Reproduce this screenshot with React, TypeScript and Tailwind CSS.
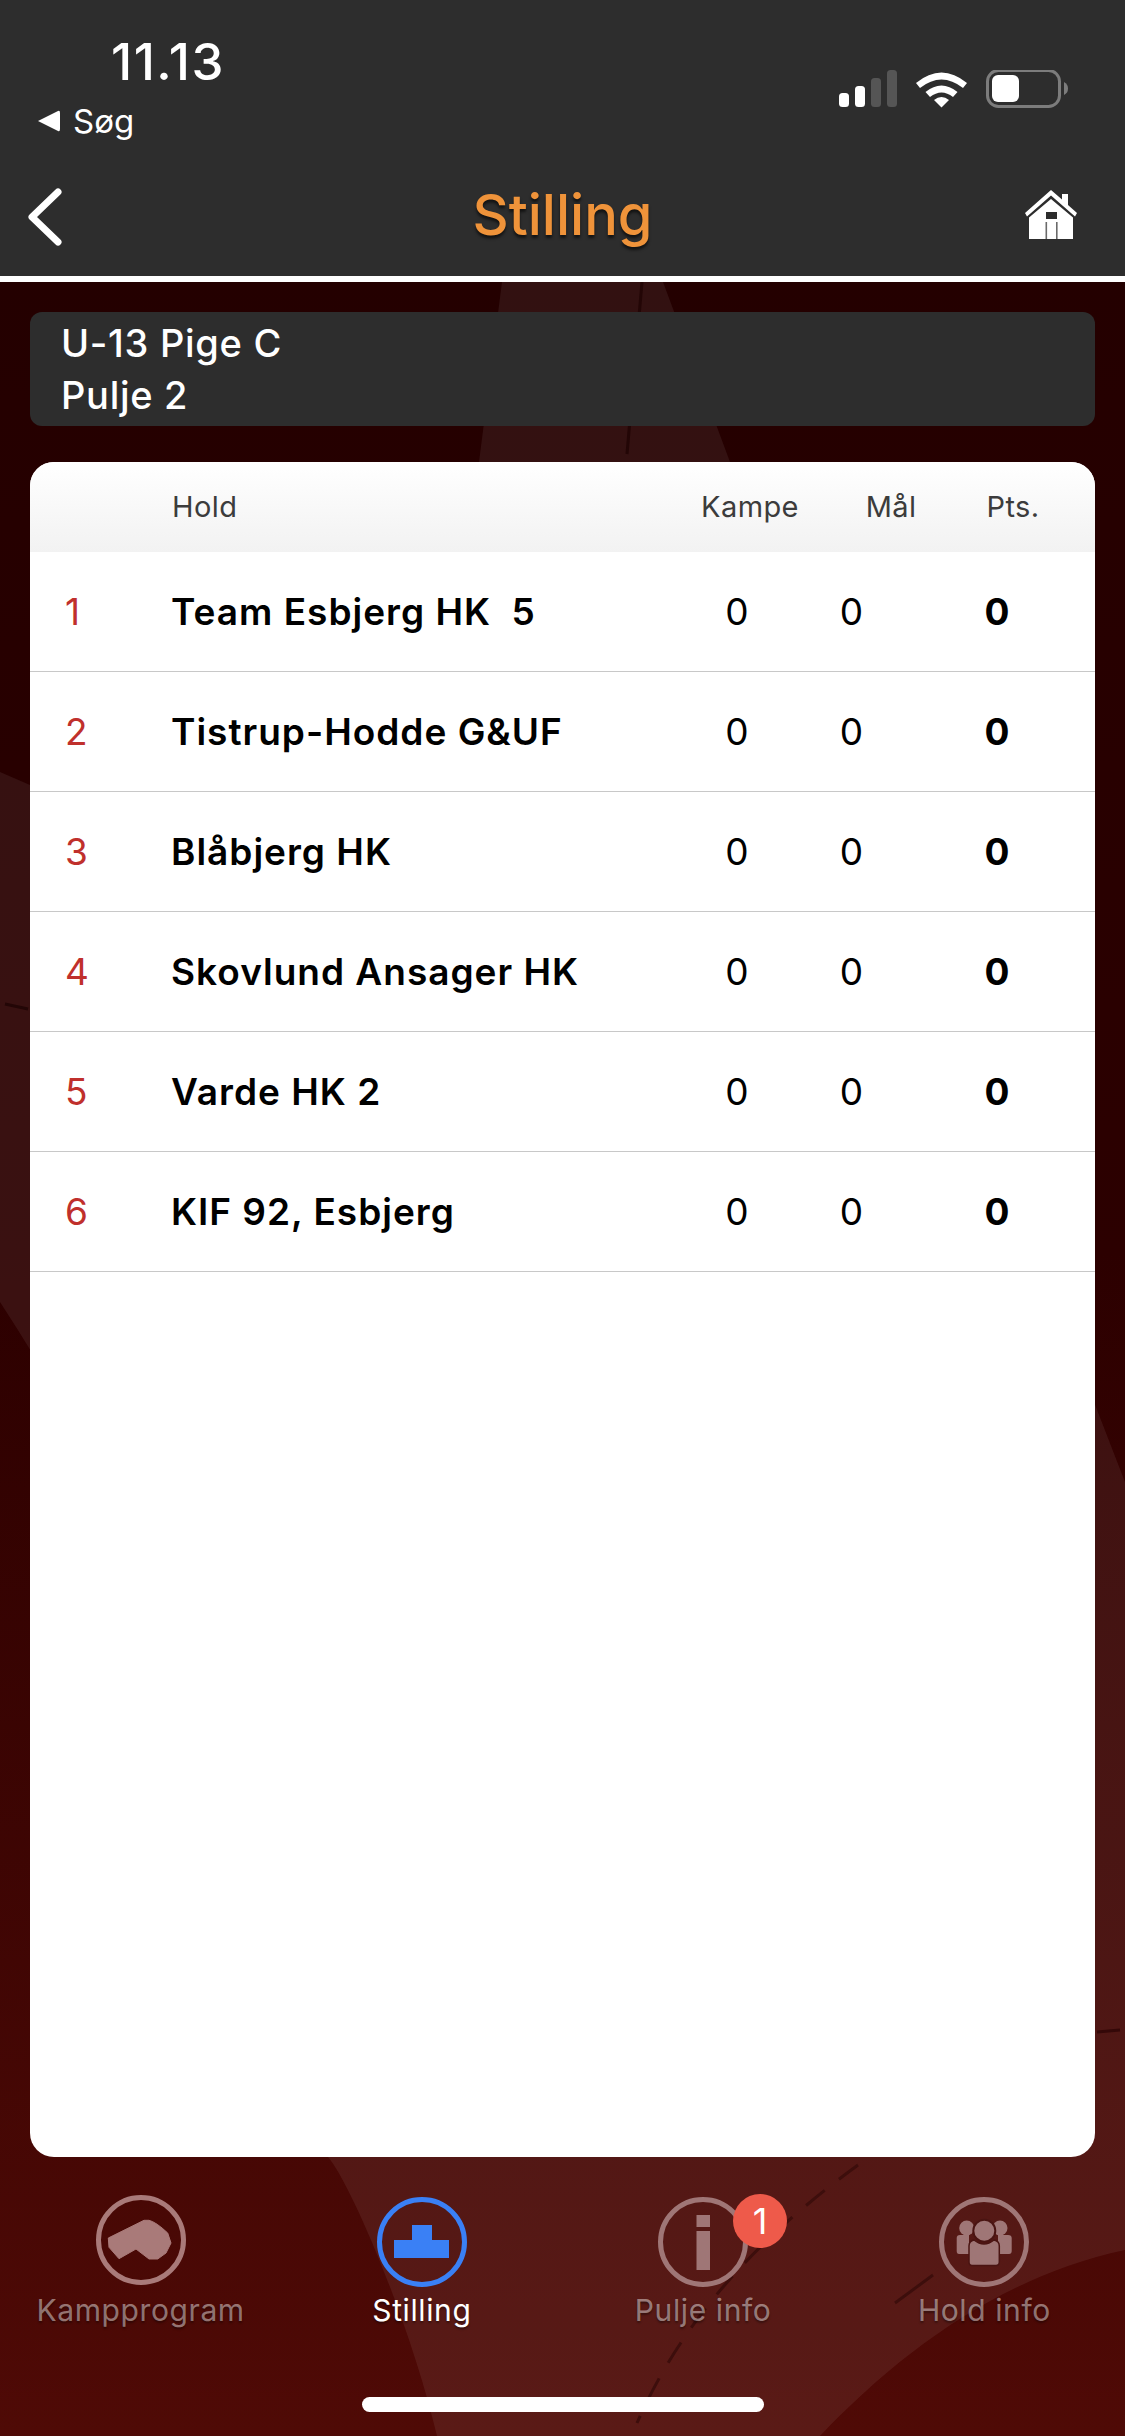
const rows = [
  "Team Esbjerg HK\u00a0\u00a05",
  "Tistrup-Hodde G&UF",
  "Blåbjerg HK",
  "Skovlund Ansager HK",
  "Varde HK 2",
  "KIF 92, Esbjerg",
];

function Background() {
  return (
    <svg className="absolute inset-0 w-full h-full" viewBox="0 0 1125 2154" preserveAspectRatio="none" fill="none">
      <defs>
        <linearGradient id="bg" x1="0" y1="0" x2="0" y2="1">
          <stop offset="0" stopColor="#240000" />
          <stop offset="0.45" stopColor="#2c0000" />
          <stop offset="1" stopColor="#4f0a06" />
        </linearGradient>
      </defs>
      <rect width="1125" height="2154" fill="url(#bg)" />
      <path d="M502 0 L663 0 L730 180 L1125 1200 L1125 1968 C1000 1995 900 2070 820 2154 L437 2154 C410 2040 350 1900 328 1875 C250 1500 150 1250 0 1020 L0 490 L300 620 L479 180 Z" fill="#ffffff" fillOpacity="0.065" />
      <path d="M642 0 L627 172" stroke="#230606" strokeWidth="3" />
      <path d="M5 722 L28 727" stroke="#230606" strokeWidth="3" />
      <path d="M1097 1750 L1120 1748" stroke="#340808" strokeWidth="3" />
      <path d="M858 1883 C780 1940 690 2020 637 2141" stroke="#3d0e0c" strokeWidth="3" strokeDasharray="24 18" />
      <path d="M895 2021 L933 1993" stroke="#3d0e0c" strokeWidth="3" />
    </svg>
  );
}

function StatusIcons() {
  return (
    <svg width="232" height="40" viewBox="0 0 232 40" fill="none">
      <rect x="0" y="23" width="10" height="14" rx="3.5" fill="#fff" />
      <rect x="16" y="16" width="10" height="21" rx="3.5" fill="#fff" />
      <rect x="32" y="8" width="10" height="29" rx="3.5" fill="#555" />
      <rect x="48" y="0" width="10" height="37" rx="3.5" fill="#555" />
      <path d="M77 13 Q102.5 -8 128 13 L124 18 Q102.5 1 81 18 Z" fill="#fff" />
      <path d="M86.5 22 Q102.5 9 118.5 22 L114 27 Q102.5 18 91 27 Z" fill="#fff" />
      <path d="M95 30 Q102.5 24 110 30 L102.5 37.5 Z" fill="#fff" />
      <rect x="148.5" y="0.5" width="72" height="36" rx="11" stroke="#7c7c7c" strokeWidth="3" />
      <rect x="153" y="5" width="27" height="27" rx="6" fill="#fff" />
      <path d="M225 12 Q229 14 229 18.5 Q229 23 225 25 Z" fill="#7c7c7c" />
    </svg>
  );
}

function HomeIcon() {
  return (
    <svg width="52" height="49" viewBox="0 0 52 49">
      <path d="M0 23 L26 0 L37 9.5 L37 4 L43 4 L43 15 L52 23 L50 26.5 L26 5.5 L2 26.5 Z" fill="#fff" />
      <path d="M4 27.5 L26 9 L48 27.5 L48 49 L4 49 Z" fill="#fff" />
      <rect x="21" y="22" width="11" height="7" fill="#2d2d2d" />
      <rect x="20.5" y="32" width="1.6" height="17" fill="#6a6a6a" />
      <rect x="31" y="32" width="1.6" height="17" fill="#6a6a6a" />
    </svg>
  );
}

function Ring({ color, children, className }: { color: string; children: React.ReactNode; className?: string }) {
  return (
    <svg width="90" height="90" viewBox="0 0 90 90" className={className}>
      <circle cx="45" cy="45" r="42.5" fill="none" stroke={color} strokeWidth="5" />
      {children}
    </svg>
  );
}

function Tab({ label, active, icon, badge }: { label: string; active?: boolean; icon: React.ReactNode; badge?: boolean }) {
  return (
    <div className="flex flex-col items-center">
      <div className="relative w-[90px] h-[90px]">
        {icon}
        {badge && (
          <div className="absolute left-[75px] top-[-3px] w-[54px] h-[54px] rounded-full bg-[#ee5a4a] text-white text-[36px] flex items-center justify-center">
            1
          </div>
        )}
      </div>
      <div
        className={
          "mt-[3px] text-[30px] leading-[40px] tracking-[0.6px] whitespace-nowrap [text-shadow:0_2px_2px_rgba(0,0,0,0.35)] " +
          (active ? "text-white" : "text-white/45")
        }
      >
        {label}
      </div>
    </div>
  );
}

export default function App() {
  return (
    <div className="w-[1125px] h-[2436px] flex flex-col font-['Inter','Liberation_Sans',sans-serif] overflow-hidden">
      <header className="h-[282px] shrink-0 bg-[#2d2d2d] border-b-[6px] border-white flex flex-col">
        <div className="flex justify-between items-start h-[180px]">
          <div className="pl-[38px] pt-[34px]">
            <div className="pl-[73px] text-white text-[51px] leading-[56px] font-medium tracking-[1.5px]">11.13</div>
            <div className="flex items-center gap-[13px] mt-[9px] text-white text-[33px] leading-[44px]">
              <svg width="22" height="22" viewBox="0 0 22 22"><path d="M0 11 L20 1 Q22 0 22 3 L22 19 Q22 22 20 21 Z" fill="#fff" /></svg>
              <span>Søg</span>
            </div>
          </div>
          <div className="pt-[70px] pr-[54px]"><StatusIcons /></div>
        </div>
        <div className="relative flex-1 flex items-start justify-between pl-[27px] pr-[48px] pt-[8px]">
          <svg width="36" height="58" viewBox="0 0 36 58" fill="none">
            <path d="M31 4 L5 29 L31 54" stroke="#fff" strokeWidth="7" strokeLinecap="round" strokeLinejoin="round" />
          </svg>
          <div className="absolute left-0 right-0 top-[4px] text-center text-[#ef933a] text-[56px] leading-[62px] font-medium [text-shadow:0_3px_3px_rgba(0,0,0,0.6)]">
            Stilling
          </div>
          <div className="pt-[2px]"><HomeIcon /></div>
        </div>
      </header>

      <main className="relative flex-1 flex flex-col">
        <Background />
        <div className="relative flex-1 flex flex-col">
          <div className="mx-[30px] mt-[30px] h-[114px] rounded-[12px] bg-[#2d2d2d] pl-[31px] pt-[5px] text-white text-[38px] leading-[52px] font-medium tracking-[0.7px]">
            <div>U-13 Pige C</div>
            <div>Pulje 2</div>
          </div>

          <div className="mx-[30px] mt-[36px] h-[1695px] rounded-[24px] bg-white overflow-hidden">
            <div className="h-[90px] bg-gradient-to-b from-white to-[#f2f2f2] flex items-center text-[29px] text-[#3c3c3c] tracking-[0.4px]">
              <div className="w-[142px]" />
              <div className="w-[518px]">Hold</div>
              <div className="w-[120px] text-center">Kampe</div>
              <div className="w-[162px] text-center">Mål</div>
              <div className="w-[82px] text-center">Pts.</div>
            </div>
            {rows.map((name, i) => (
              <div key={name} className="h-[120px] border-b border-[#c8c8c8] flex items-center text-[37px] text-black">
                <div className="w-[141px] pl-[35px] text-[#c0302c]">{i + 1}</div>
                <div className="w-[509px] font-semibold whitespace-nowrap tracking-[1px]">{name}</div>
                <div className="w-[114px] text-center">0</div>
                <div className="w-[115px] text-center">0</div>
                <div className="w-[176px] text-center font-bold">0</div>
              </div>
            ))}
          </div>

          <nav className="mt-[40px] flex justify-around h-[200px] items-start">
            <div className="w-[281px] flex justify-center">
              <Tab label="Kampprogram" icon={
                <Ring color="#a97a79" className="-translate-y-[2px]">
                  <path d="M12.3 43 L48 25.3 L53 25.3 Q60 27 71.7 38 L75 48 L70 58 L61.7 64 L53 64 L40 54 L23 63.7 L13 52.3 Z" fill="#a97a79" stroke="#a97a79" strokeWidth="1" strokeLinejoin="round" />
                </Ring>
              } />
            </div>
            <div className="w-[281px] flex justify-center">
              <Tab label="Stilling" active icon={
                <Ring color="#3a80f5">
                  <path d="M17 43 L35 43 L35 28 L55 28 L55 43 L72 43 L72 61 L17 61 Z" fill="#3a80f5" />
                </Ring>
              } />
            </div>
            <div className="w-[281px] flex justify-center">
              <Tab label="Pulje info" badge icon={
                <Ring color="#9f7676">
                  <path d="M38.5 18 H52 V30 H38.5 Z M38.5 34 H52 V73 H38.5 Z" fill="#9f7676" />
                </Ring>
              } />
            </div>
            <div className="w-[281px] flex justify-center">
              <Tab label="Hold info" icon={
                <Ring color="#9f7676">
                  <g fill="#9f7676">
                    <circle cx="27.7" cy="31" r="7.5" />
                    <circle cx="61" cy="31" r="7.5" />
                    <path d="M17.7 41 Q17.7 38 21 38 L30 38 L30 57 L20 57 Q17.7 57 17.7 54 Z" />
                    <path d="M72.7 41 Q72.7 38 69 38 L59 38 L59 57 L70 57 Q72.7 57 72.7 54 Z" />
                    <circle cx="45.3" cy="33.7" r="11" stroke="#4a1412" strokeWidth="2" />
                    <path d="M30 49 Q30 44 35 43 Q45 51 55 43 Q60.3 44 60.3 49 L60.3 65 Q60.3 68.5 57 68.5 L33 68.5 Q30 68.5 30 65 Z" stroke="#4a1412" strokeWidth="1.5" />
                  </g>
                </Ring>
              } />
            </div>
          </nav>
          <div className="absolute left-[362px] top-[2115px] w-[402px] h-[15px] rounded-full bg-white" />
        </div>
      </main>
    </div>
  );
}
